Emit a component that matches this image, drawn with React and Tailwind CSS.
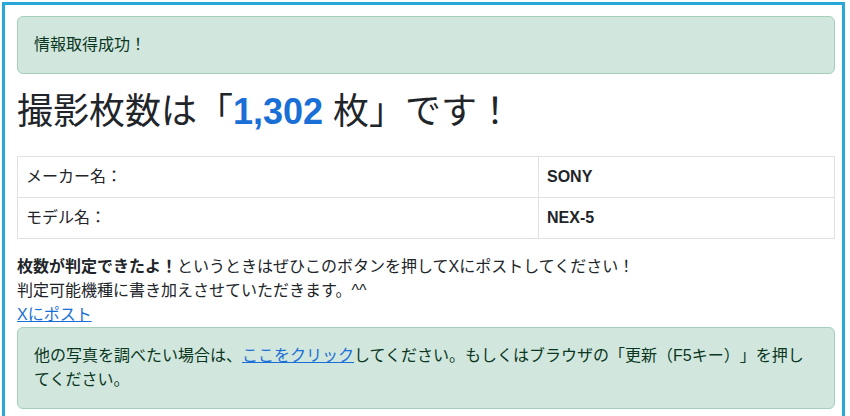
import React from "react";

export default function App() {
  return (
    <div
      className="w-[850px] h-[416px] overflow-hidden bg-white pl-[2px] pt-[2px] text-[#212529] [text-spacing-trim:space-all]"
      style={{ fontFamily: '"Liberation Sans", "Noto Sans CJK JP", sans-serif' }}
    >
      <div className="w-[843px] min-h-[430px] border-[3px] border-b-0 border-[#29a6da] pl-[12px] pr-[7px] pt-[11px]">
        <div className="rounded-[6px] border border-[#a3cfbb] bg-[#d1e7dd] p-4 text-base leading-6 text-[#0a3622] mb-4">
          情報取得成功！
        </div>

        <h1 className="text-[36px] leading-[43px] font-normal mb-[23px]">
          撮影枚数は「<span className="font-bold text-[#1a6fd6]">1,302</span> 枚」です！
        </h1>

        <table className="w-full border-collapse border border-[#dee2e6] text-base leading-6 mb-4">
          <tbody>
            <tr>
              <td className="w-[521px] border border-[#dee2e6] px-2 py-2">メーカー名：</td>
              <td className="border border-[#dee2e6] px-2 py-2 font-bold">SONY</td>
            </tr>
            <tr>
              <td className="w-[521px] border border-[#dee2e6] px-2 py-2">モデル名：</td>
              <td className="border border-[#dee2e6] px-2 py-2 font-bold">NEX-5</td>
            </tr>
          </tbody>
        </table>

        <p className="text-base leading-6">
          <span className="font-bold">枚数が判定できたよ！</span>
          というときはぜひこのボタンを押してXにポストしてください！
          <br />
          判定可能機種に書き加えさせていただきます。^^
        </p>
        <div className="text-base leading-6">
          <a href="#" className="text-[#1a6fd6] underline">Xにポスト</a>
        </div>

        <div className="rounded-[6px] border border-[#a3cfbb] bg-[#d1e7dd] p-4 text-base leading-6 text-[#0a3622]">
          他の写真を調べたい場合は、
          <a href="#" className="text-[#1a6fd6] underline">ここをクリック</a>
          してください。もしくはブラウザの「更新（F5キー）」を押してください。
        </div>
      </div>
    </div>
  );
}
